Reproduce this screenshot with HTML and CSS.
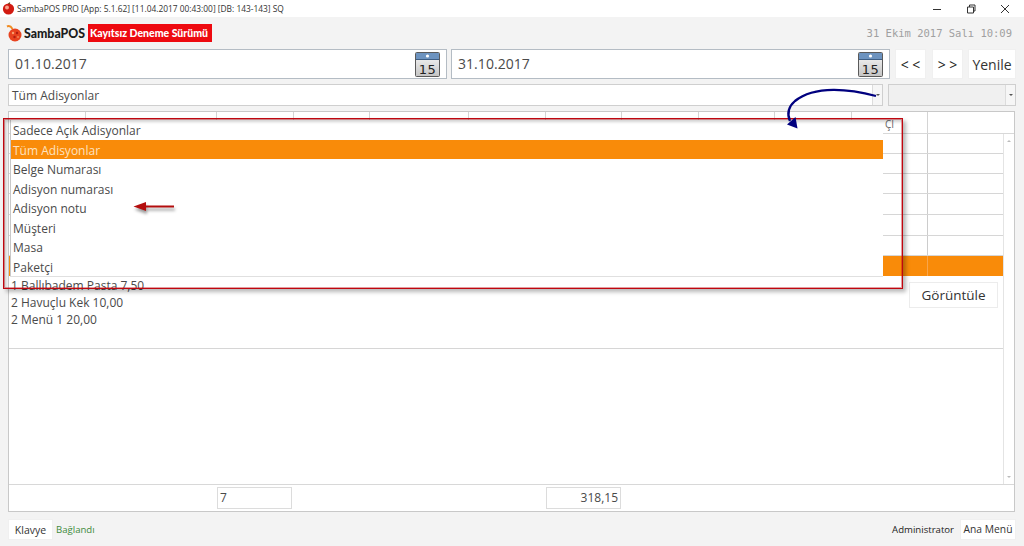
FILE: index.html
```html
<!DOCTYPE html>
<html lang="tr">
<head>
<meta charset="utf-8">
<title>SambaPOS</title>
<link rel="stylesheet" href="styles.css">
</head>
<body>
<div class="app">
  <div class="titlebar">
    <svg class="app-icon" width="13" height="13" viewBox="0 0 13 13"><circle cx="6.500" cy="7" r="5.600" fill="#d21a10"/><circle cx="5" cy="5.500" r="2" fill="#f7a08a"/><path d="M6.500 2 L8 .6" stroke="#5a3a10" stroke-width="1.200"/></svg>
    <span class="title-text">SambaPOS PRO [App: 5.1.62] [11.04.2017 00:43:00] [DB: 143-143] SQ</span>
    <div class="win-controls">
      <svg width="10" height="10" viewBox="0 0 10 10"><path d="M1 5.500H9" stroke="#333" stroke-width="1"/></svg>
      <svg width="10" height="10" viewBox="0 0 10 10"><path d="M1.500 3H7.500V9H1.500ZM3.500 3V1H9V7H7.500" fill="none" stroke="#333" stroke-width="1"/></svg>
      <svg width="10" height="10" viewBox="0 0 10 10"><path d="M1 1L9 9M9 1L1 9" stroke="#333" stroke-width="1"/></svg>
    </div>
  </div>

  <div class="brandbar">
    <svg class="logo" width="17" height="17" viewBox="0 0 17 17"><path d="M1 1.500C3 .5 5 1.500 6.500 4" fill="none" stroke="#f08a20" stroke-width="2"/><circle cx="9" cy="10" r="6.500" fill="#e8431f"/><circle cx="7" cy="8" r="1.200" fill="#f9a070"/><circle cx="11" cy="8" r="1.200" fill="#b01c10"/><circle cx="8.500" cy="12" r="1.200" fill="#b01c10"/><circle cx="12" cy="12" r="1.100" fill="#f08050"/></svg>
    <span class="brand-name">SambaPOS</span>
    <span class="badge">Kayıtsız Deneme Sürümü</span>
    <span class="clock">31 Ekim 2017 Salı 10:09</span>
  </div>

  <div class="date-row">
    <div class="date-field">
      <span class="date-text">01.10.2017</span>
      <svg class="cal" width="25" height="25" viewBox="0 0 25 25"><defs><linearGradient id="calbody" x1="0" y1="0" x2="0" y2="1"><stop offset="0" stop-color="#fafafa"/><stop offset="1" stop-color="#c4c4c4"/></linearGradient></defs><rect x=".5" y=".5" width="24" height="24" rx="1" fill="url(#calbody)" stroke="#5a5a5a"/><rect x="1" y="1" width="23" height="6" fill="#6d93bf"/><path d="M1 7.500H24" stroke="#3f5f85"/><circle cx="12.500" cy="4" r="1.600" fill="#fff"/><text x="12.500" y="21.500" class="cal-num">15</text></svg>
    </div>
    <div class="date-field second">
      <span class="date-text">31.10.2017</span>
      <svg class="cal" width="25" height="25" viewBox="0 0 25 25"><rect x=".5" y=".5" width="24" height="24" rx="1" fill="url(#calbody)" stroke="#5a5a5a"/><rect x="1" y="1" width="23" height="6" fill="#6d93bf"/><path d="M1 7.500H24" stroke="#3f5f85"/><circle cx="12.500" cy="4" r="1.600" fill="#fff"/><text x="12.500" y="21.500" class="cal-num">15</text></svg>
    </div>
    <button class="btn nav-btn first">&lt; &lt;</button>
    <button class="btn nav-btn">&gt; &gt;</button>
    <button class="btn refresh">Yenile</button>
  </div>

  <div class="combo-row">
    <div class="combo main-combo"><span class="combo-text">Tüm Adisyonlar</span><span class="combo-arrow"></span></div>
    <div class="combo side-combo"><span class="combo-text"></span><span class="combo-arrow"></span></div>
  </div>

  <div class="grid">
    <div class="grid-head">
      <div class="h c1"></div><div class="h c2"></div><div class="h c3"></div><div class="h c4"></div>
      <div class="h c5"></div><div class="h c6"></div><div class="h c4"></div><div class="h c3"></div>
      <div class="h c4"></div><div class="h c3"></div><div class="h c4 clipped">ÇI</div><div class="h last"></div>
    </div>
    <div class="grid-body">
      <div class="grid-main">
        <div class="row r20"><span class="col-a"></span><span class="col-b"></span></div>
        <div class="row r20"><span class="col-a"></span><span class="col-b"></span></div>
        <div class="row r20"><span class="col-a"></span><span class="col-b"></span></div>
        <div class="row r21"><span class="col-a"></span><span class="col-b"></span></div>
        <div class="row r21"><span class="col-a"></span><span class="col-b"></span></div>
        <div class="row r20"><span class="col-a"></span><span class="col-b"></span></div>
        <div class="row r20 selected"><span class="col-a"></span><span class="col-b"></span></div>
        <div class="detail">
          <div class="detail-lines">
            <div>1 Ballıbadem Pasta 7,50</div>
            <div>2 Havuçlu Kek 10,00</div>
            <div>2 Menü 1 20,00</div>
          </div>
          <button class="btn view-btn">Görüntüle</button>
        </div>
        <div class="empty"></div>
      </div>
      <div class="scrollbar"><span class="up"></span><span class="down"></span></div>
    </div>
    <div class="totals">
      <div class="total-box count">7</div>
      <div class="total-box sum">318,15</div>
    </div>
  </div>

  <div class="footer">
    <button class="btn keyboard">Klavye</button>
    <span class="status">Bağlandı</span>
    <span class="user">Administrator</span>
    <button class="btn main-menu">Ana Menü</button>
  </div>

  <div class="popup">
    <div class="item">Sadece Açık Adisyonlar</div>
    <div class="item active">Tüm Adisyonlar</div>
    <div class="item">Belge Numarası</div>
    <div class="item">Adisyon numarası</div>
    <div class="item">Adisyon notu</div>
    <div class="item">Müşteri</div>
    <div class="item">Masa</div>
    <div class="item">Paketçi</div>
  </div>
  <div class="red-frame"></div>

  <svg class="annot" width="1024" height="546" viewBox="0 0 1024 546">
    <g class="red-arrow">
      <path d="M145 206.500H174" stroke="#b30d0d" stroke-width="2"/>
      <path d="M133.500 206.500L146 202V211Z" fill="#b30d0d"/>
    </g>
    <path d="M876 96C850 89 815 85 795 101C788 107 787 114 790 121" fill="none" stroke="#00007f" stroke-width="2.300"/>
    <path d="M797.500 128.500L787 124.500L795.500 117Z" fill="#00007f"/>
  </svg>
</div>
</body>
</html>
```

FILE: styles.css
```css
* { box-sizing: border-box; }
html, body { margin: 0; padding: 0; }
body { width: 1024px; height: 546px; overflow: hidden; font-family: "Open Sans", "Noto Sans", sans-serif; color: #444; }
.app { position: relative; width: 1024px; height: 546px; background: #f3f3f3; display: flex; flex-direction: column; }

.titlebar { height: 17px; background: #fff; display: flex; align-items: center; padding-left: 2px; }
.app-icon { margin-right: 2px; }
.title-text { font-size: 8.4px; color: #333; white-space: nowrap; }
.win-controls { margin-left: auto; display: flex; gap: 24px; padding-right: 14px; }

.brandbar { height: 32px; display: flex; align-items: center; padding-left: 6px; }
.logo { margin-right: 1px; }
.brand-name { font-family: "Lato", sans-serif; font-weight: 900; font-size: 12.3px; color: #1c1c1c; width: 64px; }
.badge { background: #ee0a10; color: #fff; font-family: "Lato", sans-serif; font-weight: 900; font-size: 10.5px; height: 18px; line-height: 18px; padding: 0 2px; width: 124px; white-space: nowrap; }
.clock { margin-left: auto; font-family: "DejaVu Sans Mono", monospace; font-size: 10.5px; color: #a0a0a0; padding-right: 12px; }

.date-row { height: 30px; display: flex; padding-left: 8px; }
.date-field { width: 439px; height: 30px; background: #fff; border: 1px solid #b4bcc4; display: flex; align-items: center; justify-content: space-between; padding: 0 6px 0 6px; font-size: 14px; color: #4a4a4a; }
.date-field.second { margin-left: 4px; }
.date-text { margin-top: -2px; letter-spacing: .05px; }
.cal { margin-top: 0; }
.cal-num { font-family: "DejaVu Sans", sans-serif; font-size: 13px; fill: #222; text-anchor: middle; letter-spacing: .5px; }

.btn { background: #fff; border: 1px solid #f0f0f0; font-family: inherit; color: #333; padding: 0; margin: 0; }
.nav-btn { width: 31px; height: 30px; font-size: 14px; margin-left: 6px; color: #222; }
.nav-btn.first { margin-left: 5px; }
.refresh { width: 48px; height: 30px; font-size: 14px; margin-left: 5px; }

.combo-row { height: 22px; margin-top: 5px; display: flex; padding-left: 8px; }
.combo { height: 22px; border: 1px solid #cfcfcf; display: flex; }
.main-combo { width: 875px; background: #fff; }
.side-combo { width: 128px; margin-left: 5px; background: #f0f0f0; }
.combo-text { flex: 1; font-size: 12px; line-height: 21px; padding-left: 3px; color: #4a4a4a; }
.combo-arrow { width: 10px; border-left: 1px solid #dcdcdc; position: relative; background: #f6f6f6; }
.combo-arrow::after { content: ""; position: absolute; left: 3px; top: 9px; border: 2px solid transparent; border-top: 2px solid #555; }

.grid { margin: 5px 9px 0 8px; height: 401px; background: #fff; border: 1px solid #c8c8c8; display: flex; flex-direction: column; }
.grid-head { height: 22px; display: flex; border-bottom: 1px solid #d8d8d8; flex: none; }
.h { border-right: 1px solid #d4d4d4; height: 100%; flex: none; }
.c1 { width: 77px; } .c2 { width: 131px; } .c3 { width: 77px; } .c4 { width: 76px; } .c5 { width: 99px; } .c6 { width: 77px; }
.last { flex: 1; border-right: 0; }
.clipped { font-size: 10px; padding-left: 33px; line-height: 25px; color: #666; white-space: nowrap; overflow: hidden; }
.grid-body { flex: 1; display: flex; min-height: 0; }
.grid-main { flex: 1; display: flex; flex-direction: column; min-width: 0; }
.row { display: flex; justify-content: flex-end; flex: none; border-bottom: 1px solid #d6d6d6; }
.r20 { height: 20px; } .r21 { height: 21px; }
.col-a { width: 76px; }
.col-b { width: 76px; border-left: 1px solid #ccc; }
.selected { background: #f98b09; border-bottom: 0; }
.selected .col-b { border-left-color: #f9a54a; }
.detail { height: 73px; flex: none; display: flex; justify-content: space-between; align-items: flex-start; border-bottom: 1px solid #d6d6d6; padding: 1px 5px 0 2px; }
.detail-lines { font-size: 12px; line-height: 17px; color: #4a4a4a; }
.view-btn { width: 89px; height: 26px; font-size: 13.5px; border-color: #ececec; margin-top: 5px; }
.empty { flex: 1; }
.scrollbar { width: 11px; background: #fff; border-left: 1px solid #e4e4e4; display: flex; flex-direction: column; justify-content: space-between; padding: 4px 0; align-items: center; flex: none; }
.scrollbar span { border: 2px solid transparent; }
.up { border-bottom: 2px solid #bbb !important; }
.down { border-top: 2px solid #bbb !important; }

.totals { height: 27px; flex: none; border-top: 1px solid #d8d8d8; display: flex; align-items: center; padding-left: 208px; }
.total-box { height: 22px; border: 1px solid #dcdcdc; font-size: 12px; line-height: 20px; width: 75px; color: #4a4a4a; }
.count { padding-left: 2px; }
.sum { margin-left: 254px; text-align: right; padding-right: 2px; }

.footer { flex: 1; display: flex; align-items: center; padding: 0 8px 0 8px; }
.keyboard { width: 45px; height: 21px; font-size: 10.5px; margin-top: 1px; }
.status { font-size: 9.6px; color: #3f8a3c; margin-left: 3px; }
.user { margin-left: auto; font-size: 9.6px; color: #222; }
.main-menu { width: 56px; height: 21px; font-size: 10.3px; margin-left: 6px; }

.popup { position: absolute; left: 10px; top: 120px; width: 873px; height: 156px; background: #fff; border-left: 1px solid #c8c8c8; box-shadow: 0 1px 0 #e0e0e0; }
.item { height: 19.5px; padding-top: 1px; line-height: 19px; font-size: 12px; padding-left: 2px; color: #4a4a4a; }
.item.active { background: #f98b09; color: #fde2c0; }
.red-frame { position: absolute; left: 3px; top: 118px; width: 900px; height: 171px; border: 1px solid #c0060f; box-shadow: 3px 3px 4px rgba(0,0,0,.28), inset 0 0 0 1px rgba(190,10,18,.4), inset 2px 3px 3px rgba(0,0,0,.18); pointer-events: none; }
.annot { position: absolute; left: 0; top: 0; pointer-events: none; }
.red-arrow { filter: drop-shadow(1px 3px 1.5px rgba(0,0,0,.4)); }
```
